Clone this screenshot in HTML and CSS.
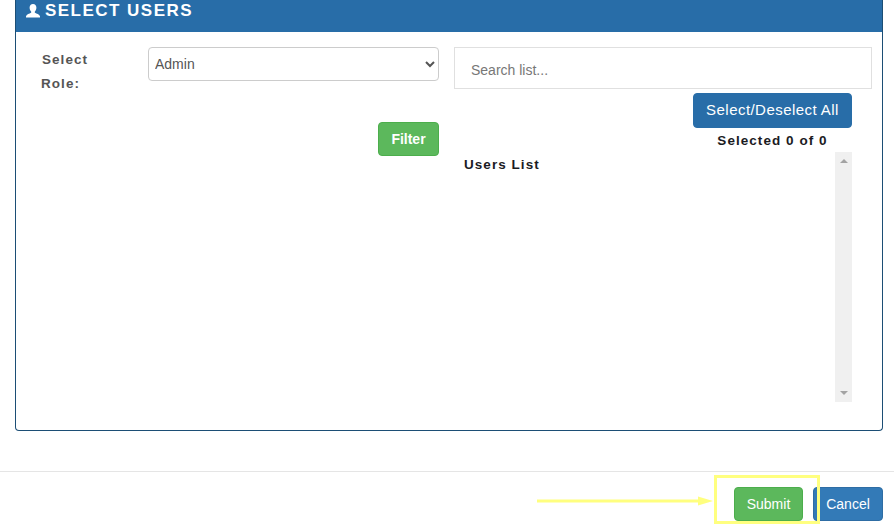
FILE: index.html
```html
<!DOCTYPE html>
<html lang="en">
<head>
<meta charset="utf-8">
<title>Select Users</title>
<link rel="stylesheet" href="styles.css">
</head>
<body>
<section class="panel">
  <header class="panel-head">
    <svg class="user-icon" viewBox="0 0 14 14" aria-hidden="true"><path d="M7 0C4.900 0 3.600 1.500 3.600 3.600c0 1.600.6 3 1.500 3.900.3.4.3 1-.1 1.300C3.500 9.900.6 10.200 0 12.200V13.500h14v-1.300c-.6-2-3.500-2.300-5-3.400-.4-.3-.4-.9-.1-1.300.9-.9 1.500-2.300 1.500-3.900C10.400 1.500 9.100 0 7 0z"/></svg>
    <h2 class="panel-title">SELECT USERS</h2>
  </header>
  <div class="panel-body">
    <div class="filters">
      <div class="role-row">
        <label class="role-label" for="role">Select<br>Role:</label>
        <select class="role-select" id="role"><option>Admin</option></select>
      </div>
      <button class="btn btn-green filter-btn" type="button">Filter</button>
    </div>
    <div class="list-col">
      <input class="search" type="text" placeholder="Search list...">
      <div class="list-actions">
        <button class="btn btn-blue select-all" type="button">Select/Deselect All</button>
        <div class="count">Selected 0 of 0</div>
      </div>
      <div class="list-area">
        <div class="list-title">Users List</div>
        <div class="scrollbar"><span class="arrow-up"></span><span class="arrow-down"></span></div>
      </div>
    </div>
  </div>
</section>
<footer class="footer">
  <button class="btn btn-green submit" type="button">Submit</button>
  <button class="btn btn-cancel" type="button">Cancel</button>
</footer>
<div class="mark-box"></div>
<svg class="mark-arrow" viewBox="0 0 176 10" aria-hidden="true"><path d="M0 3.500h161V.5l15 4.500-15 4.500v-3H0z"/></svg>
</body>
</html>
```
FILE: styles.css
```css
* { box-sizing: border-box; }
html, body { height: 524px; overflow: hidden; }
body {
  margin: 0;
  position: relative;
  background: #fff;
  font-family: "Liberation Sans", Arial, sans-serif;
  font-size: 14px;
  color: #555;
}
.panel {
  margin: 0 11px 0 15px;
  height: 431px;
  border: 1px solid #1c4e75;
  border-top: 0;
  border-radius: 0 0 4px 4px;
  display: flex;
  flex-direction: column;
}
.panel-head {
  height: 32px;
  flex: none;
  background: #286da8;
  color: #fff;
  display: flex;
  align-items: flex-start;
  gap: 5px;
  padding: 0 0 0 10px;
}
.user-icon { width: 14px; height: 14px; margin-top: 4px; fill: #fff; flex: none; }
.panel-title {
  margin: 0;
  font-size: 17px;
  line-height: 21px;
  font-weight: 700;
  letter-spacing: 1.47px;
}
.panel-body {
  flex: 1;
  display: flex;
  padding: 15px 10px 0 25px;
  gap: 15px;
}
.filters {
  width: 398px;
  flex: none;
  display: flex;
  flex-direction: column;
  align-items: flex-end;
}
.role-row { display: flex; width: 100%; }
.role-label {
  width: 107px;
  flex: none;
  font-weight: 700;
  font-size: 13.5px;
  line-height: 24px;
  letter-spacing: 1.05px;
  padding-top: 1px;
  text-indent: 1px;
  color: #555;
}
.role-select {
  flex: 1;
  min-width: 0;
  height: 34px;
  border: 1px solid #ccc;
  border-radius: 4px;
  background: #fff;
  color: #555;
  font: 14px "Liberation Sans", Arial, sans-serif;
  padding: 0 2px;
}
.btn {
  display: block;
  height: 34px;
  border: 1px solid transparent;
  border-radius: 4px;
  color: #fff;
  font: 14px/20px "Liberation Sans", Arial, sans-serif;
  padding: 0;
}
.btn-green { background: #5cb85c; border-color: #4cae4c; }
.btn-blue { background: #286da8; border-color: #286da8; }
.btn-cancel { background: #337ab7; border-color: #2e6da4; width: 70px; }
.filter-btn { width: 61px; margin-top: 26px; font-weight: 700; }
.list-col { flex: 1; display: flex; flex-direction: column; min-width: 0; }
.search {
  height: 42px;
  width: 100%;
  flex: none;
  border: 1px solid #e0e0e0;
  padding: 4px 16px 0;
  font: 14px "Liberation Sans", Arial, sans-serif;
  color: #555;
  outline: 0;
}
.search::placeholder { color: #777; opacity: 1; }
.list-actions {
  margin: 4px 20px 0 0;
  align-self: flex-end;
  width: 159px;
}
.select-all { width: 159px; height: 35px; font-size: 15px; letter-spacing: .45px; padding-bottom: 1px; }
.count {
  text-align: center;
  margin-top: 4px;
  font-weight: 700;
  font-size: 13.5px;
  line-height: 17px;
  letter-spacing: 1.05px;
  color: #1b1b1f;
  white-space: nowrap;
}
.list-area {
  display: flex;
  justify-content: space-between;
  margin: 3px 20px 0 10px;
}
.list-title {
  font-weight: 700;
  font-size: 13.5px;
  line-height: 17px;
  letter-spacing: 1.05px;
  color: #1b1b1f;
  padding-top: 4px;
}
.scrollbar {
  width: 17px;
  height: 250px;
  background: #f0f0f0;
  position: relative;
}
.arrow-up, .arrow-down {
  position: absolute;
  left: 5px;
  width: 0;
  height: 0;
  border-left: 4px solid transparent;
  border-right: 4px solid transparent;
}
.arrow-up { top: 7px; border-bottom: 4px solid #a3a3a3; }
.arrow-down { bottom: 7px; border-top: 4px solid #a3a3a3; }
.footer {
  margin-top: 40px;
  border-top: 1px solid #e5e5e5;
  padding: 15px 11px 0 0;
  display: flex;
  justify-content: flex-end;
  gap: 10px;
}
.submit { width: 69px; }
.mark-box {
  position: absolute;
  left: 714px;
  top: 475px;
  width: 106px;
  height: 49px;
  border: 3px solid #ffff7f;
}
.mark-arrow {
  position: absolute;
  left: 537px;
  top: 496px;
  width: 176px;
  height: 10px;
  fill: #ffff7f;
}
```
